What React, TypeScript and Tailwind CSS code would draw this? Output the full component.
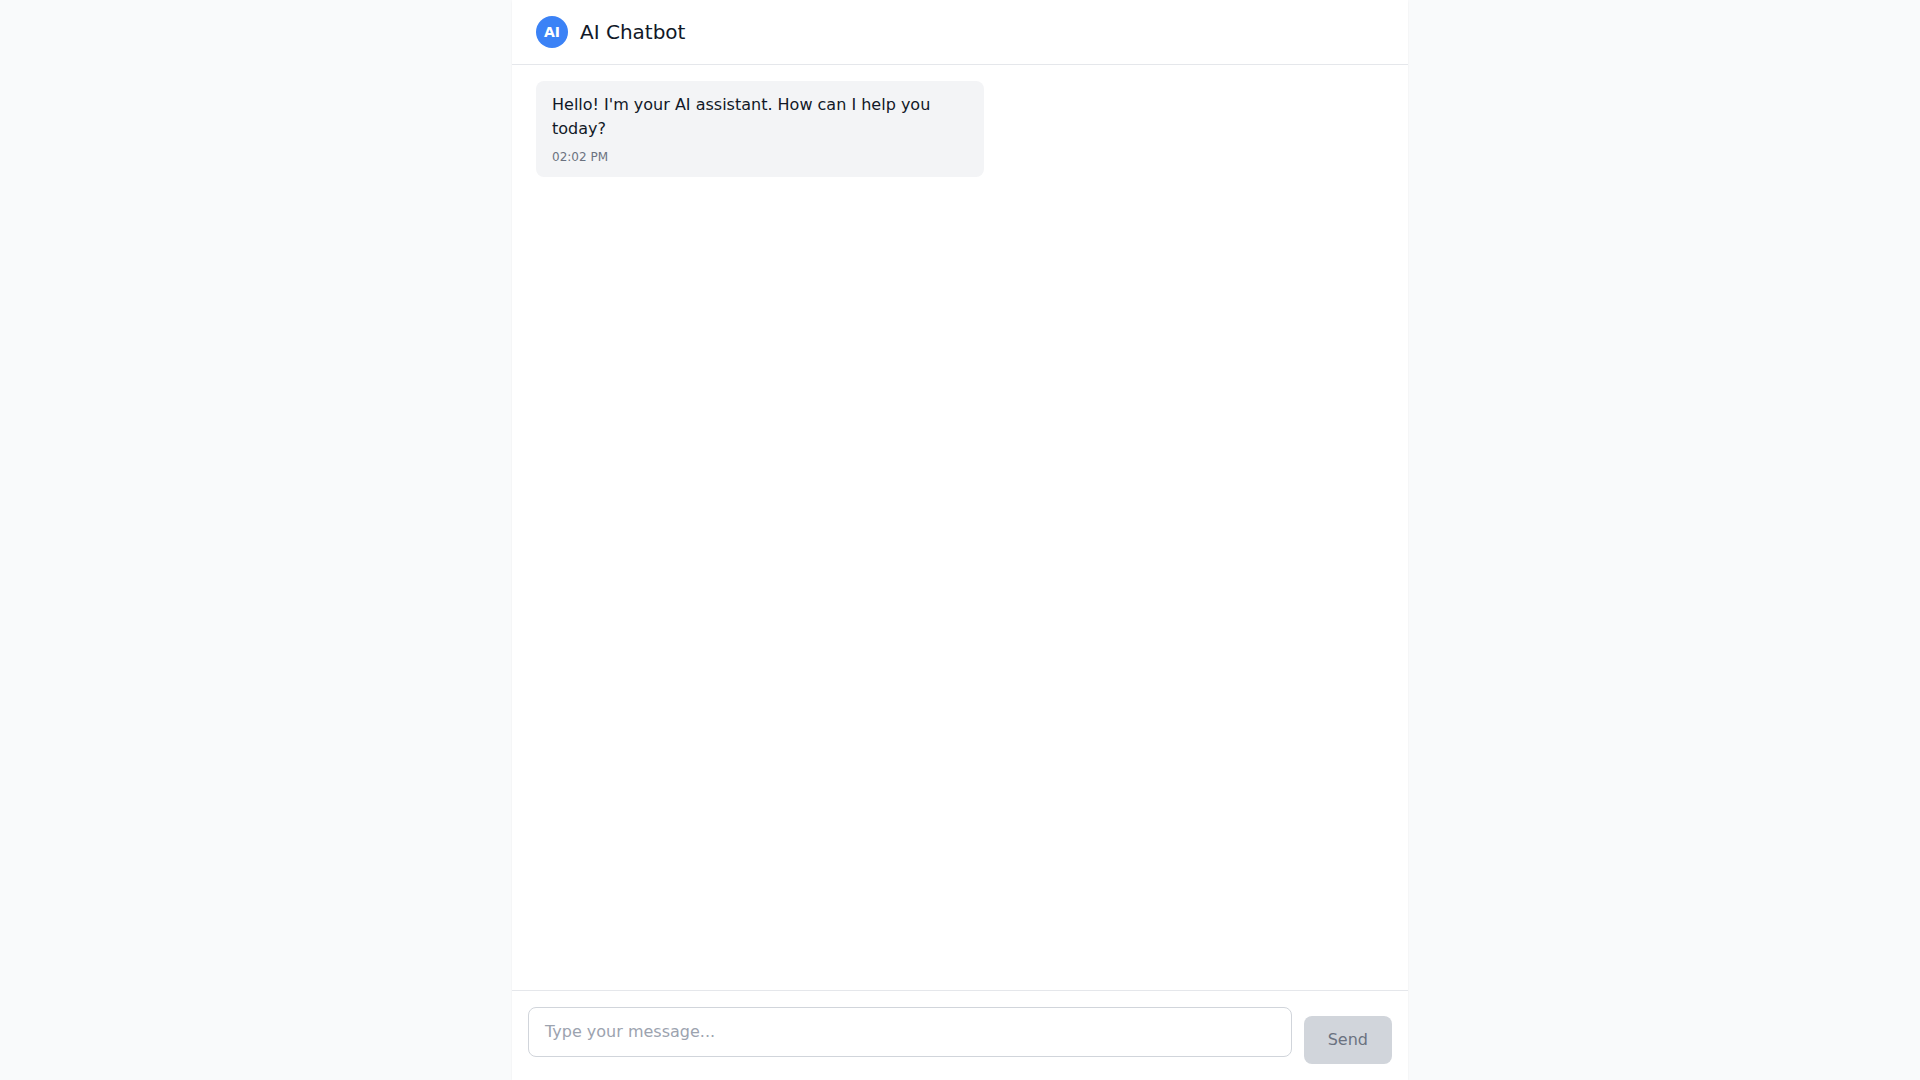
import { useState } from 'react'
import type { FormEvent } from 'react'
import clsx from 'clsx'

interface Message {
  id: number
  text: string
  sender: 'user' | 'bot'
  time: string
}

const initialMessages: Message[] = [
  {
    id: 1,
    text: "Hello! I'm your AI assistant. How can I help you today?",
    sender: 'bot',
    time: '02:02 PM',
  },
]

export default function App() {
  const [messages, setMessages] = useState(initialMessages)

  const addMessage = (text: string) => {
    const time = new Date().toLocaleTimeString('en-US', { hour: '2-digit', minute: '2-digit' })
    setMessages((prev) => [...prev, { id: prev.length + 1, text, sender: 'user', time }])
  }

  return (
    <div className="h-screen bg-[#f9fafb] font-['DejaVu_Sans',sans-serif] text-[#111827]">
      <div className="mx-auto flex h-full max-w-4xl flex-col bg-white shadow-xs">
        <Header />
        <main className="flex-1 space-y-4 overflow-y-auto px-6 py-4">
          {messages.map((message) => (
            <MessageBubble key={message.id} message={message} />
          ))}
        </main>
        <MessageForm onSend={addMessage} />
      </div>
    </div>
  )
}

function Header() {
  return (
    <header className="flex items-center gap-3 border-b border-[#e5e7eb] px-6 py-4">
      <div className="flex size-8 items-center justify-center rounded-full bg-[#3b82f6] text-sm font-bold text-white">
        AI
      </div>
      <h1 className="text-xl">AI Chatbot</h1>
    </header>
  )
}

function MessageBubble({ message }: { message: Message }) {
  const isUser = message.sender === 'user'

  return (
    <div className={clsx('flex', isUser ? 'justify-end' : 'justify-start')}>
      <div
        className={clsx(
          'max-w-md rounded-lg px-4 py-3',
          isUser ? 'bg-[#3b82f6] text-white' : 'bg-[#f3f4f6]',
        )}
      >
        <p>{message.text}</p>
        <p className={clsx('mt-2 text-xs', isUser ? 'text-blue-100' : 'text-[#6b7280]')}>
          {message.time}
        </p>
      </div>
    </div>
  )
}

function MessageForm({ onSend }: { onSend: (text: string) => void }) {
  const [draft, setDraft] = useState('')

  const handleSubmit = (e: FormEvent) => {
    e.preventDefault()
    if (!draft.trim()) return
    onSend(draft.trim())
    setDraft('')
  }

  return (
    <form onSubmit={handleSubmit} className="flex items-end gap-3 border-t border-[#e5e7eb] p-4">
      <div className="flex-1">
        <textarea
          rows={1}
          value={draft}
          onChange={(e) => setDraft(e.target.value)}
          aria-label="Message"
          placeholder="Type your message..."
          className="w-full resize-none rounded-lg border border-[#d1d5db] px-4 py-3 placeholder:text-[#9ca3af]"
        />
      </div>
      <button
        type="submit"
        disabled={!draft.trim()}
        className="rounded-lg bg-[#3b82f6] px-6 py-3 text-white disabled:bg-[#d1d5db] disabled:text-[#6b7280]"
      >
        Send
      </button>
    </form>
  )
}
